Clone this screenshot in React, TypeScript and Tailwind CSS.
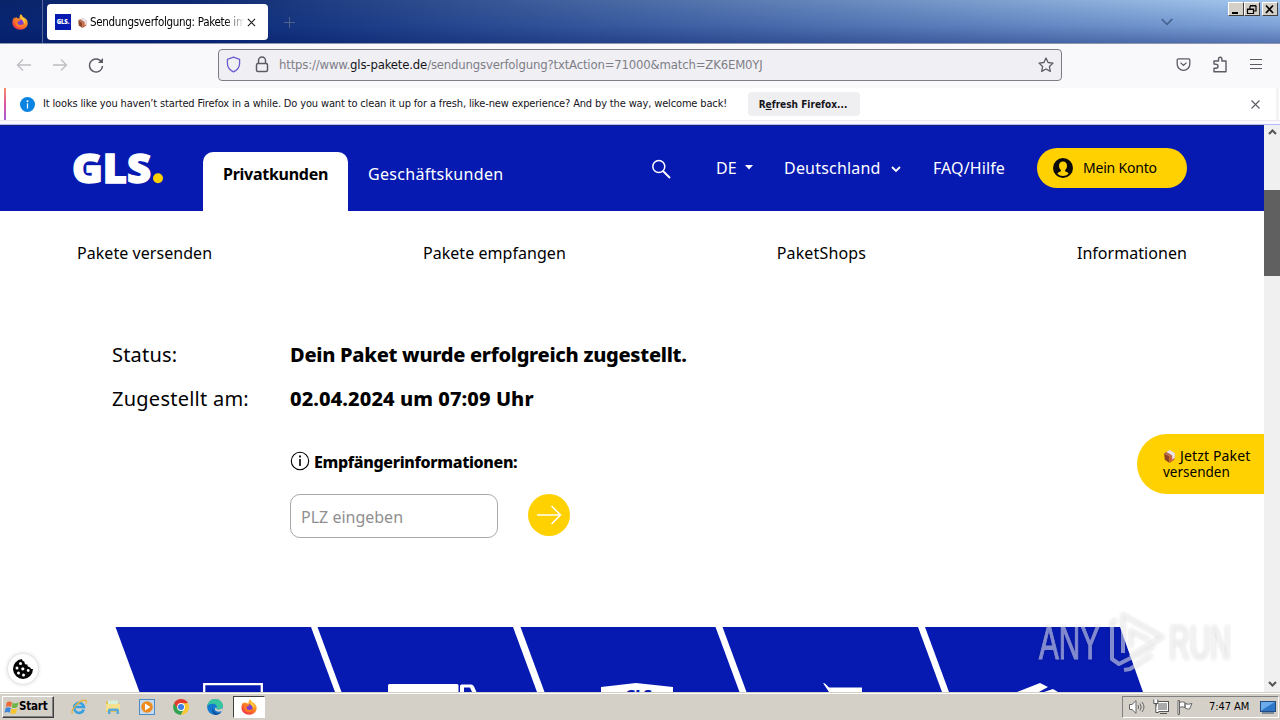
import React from "react";

const Firefox = ({ className = "" }: { className?: string }) => (
  <svg viewBox="0 0 16 16" className={className}>
    <defs>
      <linearGradient id="ffx" x1="0.85" y1="0" x2="0.2" y2="1">
        <stop offset="0" stopColor="#ffe14a" />
        <stop offset="0.45" stopColor="#ff8a1e" />
        <stop offset="1" stopColor="#f0294f" />
      </linearGradient>
    </defs>
    <path d="M8.6.3c1.300.8 2 1.700 2.300 2.800 2.800 1 4.800 3.200 4.800 6 0 4-3.400 6.700-7.500 6.700S.4 12.700.4 8.800C.4 6.500 1 4.600 2.300 3.200l.4 1.200 1.600-1.500.7 1.400c1-.2 2 0 2.600.3C7.400 3 7.700 1.400 8.600.3z" fill="url(#ffx)" />
    <circle cx="8.200" cy="9" r="3.500" fill="#7a3fd0" />
    <path d="M4.500 5.600c1.500-.5 3 0 4 .9-.8.9-2.300.8-2.800 1.500-.5 1.500.6 3 2.600 3 1.700 0 3-1 3.500-2.300.3 2.700-1.300 4.600-3.900 4.600-3 0-5-2.300-4.700-5z" fill="#ff7a25" />
    <path d="M9.300 2c.5 1.500 2.300 2.200 3 4 .8 1.700.5 3.300 0 4.300C12.200 7 9 6 9.300 2z" fill="#ffd23c" />
  </svg>
);

const Parcel = ({ className = "" }: { className?: string }) => (
  <svg viewBox="0 0 12 13" className={className}>
    <path d="M1 4l5 2.500V13L1.600 10z" fill="#8d4326" />
    <path d="M11 4L6 6.500V13l4.500-3z" fill="#c9603c" />
    <path d="M1 4l5-3 5 3-5 2.700z" fill="#d9b09c" />
    <path d="M3 3l5.500 3v4L11 8V4L6 1z" fill="#e9e2ea" />
    <path d="M1 4l2-1.200L8 5.600 6 6.700z" fill="#b8694a" />
  </svg>
);

const TitleBar = () => (
  <div className="relative flex h-[43px] shrink-0 bg-[linear-gradient(90deg,#0a246a_0%,#0d2a72_15%,#a6caf0_100%)]">
    <div className="absolute inset-0 bg-[linear-gradient(180deg,rgba(0,50,150,0)_0%,rgba(0,40,140,0.25)_60%,rgba(0,25,110,0.48)_100%)]" />
    <div className="relative flex w-full items-start">
      <div className="flex h-full w-[43px] items-center justify-center border-r border-[#54689b] pr-[2px]">
        <Firefox className="h-4 w-4" />
      </div>
      <div className="mt-1 ml-1 flex h-9 w-[221px] items-center rounded bg-white pl-2">
        <div className="flex h-4 w-4 shrink-0 items-center justify-center bg-[#061ab1]">
          <span className="font-['Open_Sans',sans-serif] text-[6px] leading-none font-extrabold tracking-[-0.1px] text-white">GLS.</span>
        </div>
        <Parcel className="ml-[6px] h-[11px] w-[11px] shrink-0" />
        <div className="ml-[2px] w-[154px] overflow-hidden bg-[linear-gradient(90deg,#000_135px,transparent_155px)] bg-clip-text pt-[2px] font-['DejaVu_Sans_Condensed','DejaVu_Sans',sans-serif] text-[11.500px] tracking-[-0.3px] whitespace-nowrap text-transparent">
          Sendungsverfolgung: Pakete im
        </div>
        <svg viewBox="0 0 10 10" className="ml-[3px] h-[9px] w-[9px] shrink-0" stroke="#222" strokeWidth="1.300">
          <path d="M1 1l8 8M9 1L1 9" />
        </svg>
      </div>
      <svg viewBox="0 0 11 11" className="mt-[17px] ml-4 h-[11px] w-[11px]" stroke="#4f6287" strokeWidth="1">
        <path d="M5.500 0v11M0 5.500h11" />
      </svg>
      <svg viewBox="0 0 12 8" className="mt-[18px] ml-[866px] h-2 w-3" fill="none" stroke="#45618f" strokeWidth="1.700">
        <path d="M.7 1L6 6.300 11.300 1" />
      </svg>
      <div className="mt-[2px] ml-[55px] flex">
        <WinButton><path d="M3 10h6" strokeWidth="2" /></WinButton>
        <WinButton><path d="M5 3h6v5H9M5 2.500h6M2.500 6h6v4.500h-6zM2.500 6.500h6M5 3v3" strokeWidth="1.200" /></WinButton>
        <div className="w-[2px]" />
        <WinButton><path d="M3 2.500l7 7.500M10 2.500L3 10" strokeWidth="1.700" /></WinButton>
      </div>
    </div>
  </div>
);

const WinButton = ({ children }: { children: React.ReactNode }) => (
  <div className="h-[14px] w-4 border border-t-white border-r-[#404040] border-b-[#404040] border-l-white bg-[#d4d0c8]">
    <svg viewBox="0 0 14 12" className="h-3 w-[14px]" fill="none" stroke="#000">{children}</svg>
  </div>
);

const ToolBar = () => (
  <div className="flex h-[45px] shrink-0 items-center border-t border-[#8d97b0] bg-[#f9f9fb] pb-[3px]">
    <svg viewBox="0 0 16 14" className="ml-4 h-[14px] w-4" fill="none" stroke="#bcbcc2" strokeWidth="1.300">
      <path d="M15 7H1.500M7 1.500L1.500 7 7 12.500" />
    </svg>
    <svg viewBox="0 0 16 14" className="ml-5 h-[14px] w-4" fill="none" stroke="#bcbcc2" strokeWidth="1.300">
      <path d="M1 7h13.500M9 1.500L14.500 7 9 12.500" />
    </svg>
    <svg viewBox="0 0 16 16" className="ml-5 h-4 w-4" fill="none" stroke="#5b5b66" strokeWidth="1.400">
      <path d="M13.800 5.500A6.500 6.500 0 1 0 14.500 9" />
      <path d="M15 1v5h-5z" fill="#5b5b66" stroke="none" />
    </svg>
    <div className="ml-[114px] flex h-8 w-[844px] shrink-0 items-center rounded-[4px] border border-[#7d7d86] bg-[#f0f0f4] pl-2">
      <svg viewBox="0 0 16 18" className="-ml-px h-[17px] w-[15px]" fill="none" stroke="#6a5cd0" strokeWidth="1.400">
        <path d="M8 1.200l6.500 2.300v4.300c0 4-2.500 7-6.500 9-4-2-6.500-5-6.500-9V3.500z" strokeLinejoin="round" />
      </svg>
      <svg viewBox="0 0 14 17" className="ml-[14px] h-[17px] w-[14px]" fill="none" stroke="#5b5b66" strokeWidth="1.500">
        <rect x="1.500" y="7.500" width="11" height="8" rx="1.500" />
        <path d="M3.500 7.500v-3a3.500 3.500 0 0 1 7 0v3" />
      </svg>
      <div className="ml-[10px] w-[760px] font-['DejaVu_Sans_Condensed','DejaVu_Sans',sans-serif] text-[13px] tracking-[-0.17px] whitespace-nowrap text-[#7e7e88]">
        https://www.<span className="text-[#15141a]">gls-pakete.de</span>/sendungsverfolgung?txtAction=71000&amp;match=ZK6EM0YJ
      </div>
      <svg viewBox="0 0 16 16" className="-ml-px h-4 w-4" fill="none" stroke="#5b5b66" strokeWidth="1.300" strokeLinejoin="round">
        <path d="M8 1l2.100 4.500 4.900.6-3.600 3.400.9 4.900L8 12l-4.300 2.400.9-4.900L1 6.100l4.900-.6z" />
      </svg>
    </div>
    <svg viewBox="0 0 16 14" className="ml-[114px] h-[13px] w-[15px]" fill="none" stroke="#5b5b66" strokeWidth="1.400">
      <path d="M2.500 1h11A1.300 1.300 0 0 1 14.800 2.300V6.500a6.700 6.700 0 0 1-13.600 0V2.300A1.300 1.300 0 0 1 2.500 1zM4.800 5L8 8l3.200-3" />
    </svg>
    <svg viewBox="0 0 16 17" className="ml-[21px] h-[17px] w-4" fill="none" stroke="#5b5b66" strokeWidth="1.400">
      <path d="M2 8V5h4.500V3a1.700 1.700 0 0 1 3.400 0v2H14v10.800H2V12.200h2a2 2 0 0 0 0-4z" strokeLinejoin="round" />
    </svg>
    <svg viewBox="0 0 12 12" className="-mt-px ml-[22px] h-3 w-3" stroke="#5b5b66" strokeWidth="1.200">
      <path d="M0 1.500h12M0 6.500h12M0 10.500h12" />
    </svg>
  </div>
);

const InfoBar = () => (
  <div className="flex h-[37px] shrink-0 flex-col border-b border-[#aeb9ff] bg-[#f9f9fb]">
    <div className="flex h-8 items-center bg-white">
      <div className="ml-[4px] h-8 w-[2px] bg-[linear-gradient(180deg,#f5906a,#e0559e_50%,#a05bd8)]" />
      <div className="ml-[14px] flex h-[15px] w-[15px] items-center justify-center rounded-full bg-[#0a84e0]">
        <svg viewBox="0 0 15 15" className="h-[15px] w-[15px]" fill="#fff"><circle cx="7.500" cy="4.300" r="1" /><rect x="6.900" y="6.300" width="1.200" height="5.200" /></svg>
      </div>
      <div className="ml-[8px] w-[705px] font-['DejaVu_Sans_Condensed','DejaVu_Sans',sans-serif] text-[11px] tracking-[-0.148px] whitespace-nowrap text-[#15141a]">
        It looks like you haven’t started Firefox in a while. Do you want to clean it up for a fresh, like-new experience? And by the way, welcome back!
      </div>
      <div className="flex h-6 w-[112px] items-center justify-center rounded bg-[#efeff2] pr-[2px] font-['DejaVu_Sans_Condensed','DejaVu_Sans',sans-serif] text-[10px] font-bold tracking-[0.02px] whitespace-nowrap text-[#15141a]">
        R<span className="underline">e</span>fresh Firefox...
      </div>
      <svg viewBox="0 0 9 9" className="ml-[391px] h-[9px] w-[9px]" stroke="#5b5b66" strokeWidth="1.100"><path d="M.5.5l8 8M8.500.5l-8 8" /></svg>
      <div className="ml-4 h-8 w-[3px] bg-[#f3f3f6]" />
    </div>
    <div className="h-px bg-[#e9e6f0]" />
  </div>
);

const Header = () => (
  <header className="flex h-[86px] shrink-0 border-t border-[#1a2373] bg-[#061ab1] font-['Noto_Sans',sans-serif] text-[16px] leading-6 text-white">
    <svg viewBox="0 0 92 50" className="mt-[16px] ml-[73px] h-[50px] w-[92px]">
      <text x="-1" y="41" textLength="79" lengthAdjust="spacingAndGlyphs" fill="#fff" className="font-['Open_Sans',sans-serif] text-[40px] font-extrabold" stroke="#fff" strokeWidth="1.400">GLS</text>
      <circle cx="85" cy="36.200" r="5" fill="#ffd100" />
    </svg>
    <div className="mt-[26px] ml-[38px] w-[145px] rounded-t-[10px] bg-white pt-[10px] pl-5 font-bold whitespace-nowrap text-black">
      <span className="tracking-[-0.27px]">Privatkunden</span>
    </div>
    <div className="mt-9 ml-5 w-[283px] tracking-[0.3px] whitespace-nowrap">Geschäftskunden</div>
    <svg viewBox="0 0 20 20" className="mt-[33px] h-5 w-5" fill="none" stroke="#fff" strokeWidth="1.500">
      <circle cx="7.800" cy="7.500" r="6" /><path d="M12 12l7 7" strokeWidth="2" />
    </svg>
    <div className="mt-[30px] ml-[45px] w-[29px]">DE</div>
    <svg viewBox="0 0 8 5" className="mt-[39px] h-[5px] w-2" fill="#fff"><path d="M0 0h8L4 4.500z" /></svg>
    <div className="mt-[30px] ml-[31px] w-[107px] tracking-[0.2px] whitespace-nowrap">Deutschland</div>
    <svg viewBox="0 0 10 7" className="mt-[40px] h-[7px] w-[10px]" fill="none" stroke="#fff" strokeWidth="1.800"><path d="M1 1l4 4 4-4" /></svg>
    <div className="mt-[30px] ml-8 w-[104px] tracking-[0.1px] whitespace-nowrap">FAQ/Hilfe</div>
    <div className="mt-[22px] flex h-10 w-[150px] items-center rounded-full bg-[#ffd100] pl-4 text-[14px] whitespace-nowrap text-black">
      <svg viewBox="0 0 20 20" className="h-5 w-5">
        <circle cx="10" cy="10" r="10" fill="#0a0a0a" />
        <path d="M10 3.500c-2.500 0-4 1.800-4 4.300 0 1.800.8 3.300 1.900 4.200v1.200c-1.600.6-3 1.300-3.600 2.500a8.500 8.500 0 0 0 11.400 0c-.6-1.200-2-1.900-3.600-2.500V12c1.100-.9 1.900-2.400 1.900-4.200 0-2.500-1.500-4.300-4-4.300z" fill="#ffd100" />
      </svg>
      <span className="ml-[10px] tracking-[-0.2px]">Mein Konto</span>
    </div>
  </header>
);

const SubNav = () => (
  <nav className="flex h-[85px] shrink-0 justify-between pt-[30px] pr-[77px] pl-[77px] font-['Noto_Sans',sans-serif] text-[16px] leading-6 tracking-[0.05px] text-black">
    <span>Pakete versenden</span>
    <span>Pakete empfangen</span>
    <span className="tracking-[0.15px]">PaketShops</span>
    <span>Informationen</span>
  </nav>
);

const Status = () => (
  <section className="grid grid-cols-[178px_1fr] pt-[44px] pl-[112px] font-['Noto_Sans',sans-serif] text-[20px] leading-[30px] whitespace-nowrap text-black">
    <span className="tracking-[0.2px]">Status:</span>
    <span className="font-extrabold tracking-[-0.28px]">Dein Paket wurde erfolgreich zugestellt.</span>
    <span className="mt-[14px] tracking-[0.25px]">Zugestellt am:</span>
    <span className="mt-[14px] font-extrabold tracking-[0.08px]">02.04.2024 um 07:09 Uhr</span>
    <div className="col-start-2 mt-[37px] flex h-5 items-center">
      <svg viewBox="0 0 20 20" className="h-5 w-5" fill="none" stroke="#000" strokeWidth="1.100">
        <circle cx="10" cy="10" r="8.700" /><path d="M10 8v7" strokeWidth="1.600" /><path d="M10 4.500v2" strokeWidth="1.800" />
      </svg>
      <span className="mt-[2px] ml-1 text-[16px] font-extrabold tracking-[-0.34px]">Empfängerinformationen:</span>
    </div>
    <div className="col-start-2 mt-[23px] flex">
      <div className="h-11 w-[208px] rounded-[10px] border border-[#a9a9a9] pt-[7px] pl-[10px] text-[16px] text-[#8f8f8f]">PLZ eingeben</div>
      <div className="ml-[30px] flex h-[42px] w-[42px] items-center justify-center rounded-full bg-[#ffd100]">
        <svg viewBox="0 0 26 20" className="h-5 w-[26px]" fill="none" stroke="#fff" strokeWidth="1.500"><path d="M1 10h23M15.500 1l9 9-9 9" /></svg>
      </div>
    </div>
  </section>
);

const Tiles = () => (
  <svg viewBox="0 0 1264 65" className="absolute bottom-0 left-0 h-[65px] w-[1264px]">
    <g fill="#061ab1">
      <path d="M115.500 0H311l24 65H139.500z" />
      <path d="M317.500 0H513l24 65H341.500z" />
      <path d="M520.500 0H715.500l24 65H544.500z" />
      <path d="M722.500 0H918l24 65H746.500z" />
      <path d="M925 0H1120l23 65H949z" />
    </g>
    <path d="M204.200 65V57.200h57.600V65" fill="none" stroke="#fff" strokeWidth="2.300" />
    <path d="M388 65v-6.500a1.500 1.500 0 0 1 1.500-1.500H457a1.500 1.500 0 0 1 1.500 1.500V65z" fill="#fff" />
    <path d="M460 65v-6a1.500 1.500 0 0 1 1.500-1.500H471q2 0 3 2l2.500 5.500H472l-2-4.500h-6V65z" fill="#fff" />
    <path d="M601 65v-5l35-4 37 4v5z" fill="#fff" />
    <text x="625" y="74" fill="#061ab1" className="font-['Open_Sans',sans-serif] text-[15px] font-extrabold" textLength="27">GLS</text>
    <path d="M823 56l2 .5 4 4H862V65H829z" fill="#fff" />
    <path d="M1017 65l23-9 8 4-9 5zM1044 65l9-3 5 3z" fill="#fff" />
  </svg>
);

const Watermark = () => (
  <svg viewBox="0 0 200 66" className="absolute bottom-[17px] left-[1037px] h-[66px] w-[200px] drop-shadow-[0_0_1.500px_rgba(0,0,0,0.3)]">
    <g fill="#fff" opacity="0.5" stroke="#fff" strokeWidth="1.200" className="font-['Liberation_Sans_Narrow','Liberation_Sans',sans-serif] text-[48px]">
      <text x="2" y="50" textLength="61" lengthAdjust="spacingAndGlyphs">ANY</text>
      <text x="132" y="50" textLength="62" lengthAdjust="spacingAndGlyphs">RUN</text>
    </g>
    <g fill="none" stroke="#fff" strokeWidth="4" opacity="0.5" strokeLinejoin="round">
      <path d="M86 44V6l39 22-32 20" />
      <path d="M80 11l-5 2v37l7 5 35-18M94 38V22l18 9" />
      <path d="M87 61l6-1 22-14" />
    </g>
  </svg>
);

const Page = () => (
  <div className="relative flex h-[567px] shrink-0">
    <div className="relative flex w-[1264px] flex-col overflow-hidden bg-white">
      <Header />
      <SubNav />
      <Status />
      <Tiles />
      <div className="absolute top-[309px] right-0 h-[60px] w-[127px] rounded-l-full bg-[#ffd100] pt-[14px] pl-[26px] font-['Noto_Sans',sans-serif] text-[14px] leading-4 whitespace-nowrap text-black">
        <div className="flex items-center"><Parcel className="mr-[4px] h-[14px] w-[13px]" /><span className="tracking-[0.15px]">Jetzt Paket</span></div>
        <div className="text-[13.500px]">versenden</div>
      </div>
      <div className="absolute bottom-[8px] left-[8px] flex h-[30px] w-[30px] items-center justify-center rounded-full bg-white shadow-[0_0_4px_rgba(0,0,0,0.25)]">
        <svg viewBox="0 0 20 20" className="h-5 w-5">
          <path d="M9 0a10 10 0 1 0 11 10c-1.500.3-2.600-.4-2.800-1.800-1.700.3-3-.9-2.700-2.600C12.300 5.800 11 4 11.500 2.600 10 2.500 9 1.500 9 0z" fill="#050505" />
          <g fill="#fff"><circle cx="7.500" cy="4.500" r="1.500" /><circle cx="4" cy="9" r="1.500" /><circle cx="9.800" cy="9.800" r="1.600" /><circle cx="15.200" cy="11.500" r="1.400" /><circle cx="5.500" cy="14" r="1.500" /><circle cx="10.500" cy="16" r="1.500" /></g>
        </svg>
      </div>
      <Watermark />
    </div>
    <div className="flex w-4 flex-col items-center bg-[#f0f0f0] pt-[4px]">
      <svg viewBox="0 0 9 6" className="h-[6px] w-[9px]" fill="none" stroke="#555" strokeWidth="2"><path d="M1 5l3.500-3.500L8 5" /></svg>
      <div className="mt-[55px] h-[86px] w-4 bg-[#606060]" />
      <svg viewBox="0 0 9 6" className="mt-auto mb-[5px] h-[6px] w-[9px]" fill="none" stroke="#555" strokeWidth="2"><path d="M1 1l3.500 3.500L8 1" /></svg>
    </div>
  </div>
);

const Taskbar = () => (
  <div className="flex h-7 shrink-0 border-t border-[#d4d0c8] bg-[#d4d0c8] shadow-[inset_0_1px_0_#fff]">
    <div className="mt-[3px] ml-[2px] flex h-[22px] w-[52px] items-center border border-t-white border-r-[#404040] border-b-[#404040] border-l-white pl-px shadow-[inset_-1px_-1px_0_#808080]">
      <svg viewBox="0 0 16 16" className="h-[15px] w-4 shrink-0">
        <path d="M2.500 2.500Q5 .8 8 2.500L7 7.500Q4 6 1.300 7.500z" fill="#ec6a35" />
        <path d="M8.700 3Q12 4.500 15 2.500l-1.300 5Q11 9.300 7.800 8z" fill="#6fb545" />
        <path d="M1.200 8.500Q4 7 6.800 8.500l-1.200 5Q3 12 0 13.500z" fill="#3f87d8" />
        <path d="M7.500 9q3 1.500 6 0l-1.300 5Q9 15.500 6.300 14z" fill="#f6c52c" />
      </svg>
      <span className="-ml-px font-['DejaVu_Sans_Condensed','DejaVu_Sans',sans-serif] text-[11.500px] font-bold tracking-[-0.2px] text-black">Start</span>
    </div>
    <div className="mt-[6px] ml-[17px] flex gap-[18px]">
      <svg viewBox="0 0 16 16" className="h-4 w-4" fill="none">
        <path d="M12.800 10.500A5 5 0 1 1 13 8H4" stroke="#3aa0e0" strokeWidth="2.600" />
        <path d="M1.500 14.500C-1 11.500 9-.5 15 1.500c1 .6.500 2-.2 3" stroke="#e7b33a" strokeWidth="1.300" />
      </svg>
      <svg viewBox="0 0 16 16" className="h-4 w-4">
        <path d="M1 2h5l1 1.500h7V13H1z" fill="#e4c260" /><path d="M3 1.500h10v5H3z" fill="#d8efdc" /><path d="M1 5h14v7H1z" fill="#f7e08c" />
        <path d="M3 15v-4q0-1.500 1.500-1.500h8Q14 9.500 14 11v4h-2.500v-3h-6v3z" fill="#5ba9d8" />
      </svg>
      <svg viewBox="0 0 16 16" className="h-4 w-4">
        <rect x=".5" y=".5" width="15" height="15" fill="#c6dcee" stroke="#4b8cc6" /><circle cx="8" cy="8" r="5.800" fill="#ef8a1d" /><path d="M6 4.500v7L11.500 8z" fill="#fff" />
      </svg>
      <svg viewBox="0 0 16 16" className="h-4 w-4">
        <path d="M8 8L1.200 4A7.900 7.900 0 0 1 14.900 4z" fill="#e33b2e" /><path d="M8 8L1.200 4A7.900 7.900 0 0 0 7.900 15.900L11 9.500z" fill="#34a350" /><path d="M8 4.200h7A7.900 7.900 0 0 1 7.900 15.900L11.400 10z" fill="#f9c72f" /><path d="M1.200 4H8v4L4.700 10z" fill="#e33b2e" />
        <circle cx="8" cy="8" r="3.900" fill="#fff" /><circle cx="8" cy="8" r="3" fill="#3c7de6" />
      </svg>
      <svg viewBox="0 0 16 16" className="h-4 w-4">
        <circle cx="8" cy="8" r="7.900" fill="#1579cf" />
        <path d="M.3 7C1 2.500 4.500.1 8.200.1c4.500 0 7.700 3 7.700 6.500 0 2.500-2 4-4.500 4-1.700 0-2.400-.7-1.700-1.600C10.500 6.500 8.500 4.800 6 4.800 3.500 4.800 1.300 5.700.3 7z" fill="#38c69d" />
        <path d="M6 8.500c-.5 3 2 5.500 5 5.500 1.500 0 3-.5 4-1.500-1.500 2.300-4 3.400-6.500 3.400C5.500 15 4 11 6 8.500z" fill="#12529b" />
        <path d="M9.700 9c-.7.900 0 1.600 1.700 1.600 2 0 3.600-.8 4.400-2l-.3 3c-2 1.400-6 1.700-7.300-.6-.5-1 0-2 .5-2.500z" fill="#d4d0c8" />
      </svg>
    </div>
    <div className="mt-[3px] ml-[10px] flex h-[22px] w-8 items-center justify-center border border-t-[#404040] border-r-white border-b-white border-l-[#404040] bg-white">
      <Firefox className="h-4 w-4" />
    </div>
    <div className="mt-[3px] ml-auto flex h-[22px] w-[157px] items-center border border-t-[#808080] border-r-white border-b-white border-l-[#808080] pl-[6px]">
      <svg viewBox="0 0 16 14" className="h-[14px] w-4" stroke="#666" fill="none"><path d="M.5 4.500H3L7 .7v12.600L3 9.500H.5z" fill="#fff" /><path d="M9 5q1.300 2 0 4M11 3.500q2.500 3.500 0 7M13 2q4 5 0 10" /></svg>
      <svg viewBox="0 0 16 16" className="ml-2 h-4 w-4" stroke="#555" fill="none"><rect x="4.500" y="3.500" width="10" height="8" fill="#aaa" stroke="#fff" /><rect x="3.500" y="2.500" width="12" height="10" /><path d="M7 14.500h7M.8.500v4h4v-4M2.800 4.500v9h3" fill="#fff" /></svg>
      <svg viewBox="0 0 16 15" className="ml-2 h-[15px] w-4" stroke="#666" fill="#fff"><path d="M1 .5h1.500v14H1zM2.500 2.500q3-1.500 5.500 0v5q-3-1.500-5.500 0zM8 3.500q3 1.500 7 0L12.500 9Q10 9.500 8 8z" /></svg>
      <span className="ml-4 w-[52px] font-['DejaVu_Sans_Condensed','DejaVu_Sans',sans-serif] text-[11px] tracking-[-0.05px] whitespace-nowrap text-black">7:47 AM</span>
      <svg viewBox="0 0 16 13" className="-ml-px h-[13px] w-4 shrink-0"><rect x=".5" y=".5" width="15" height="10" fill="#2e77c8" stroke="#244b7d" /><path d="M1 1h14L5 7 1 10z" fill="#6cacec" /><path d="M2 12h12" stroke="#28466c" /></svg>
    </div>
    <div className="w-px" />
  </div>
);

export default function App() {
  return (
    <div className="flex h-[720px] w-[1280px] flex-col overflow-hidden bg-white">
      <TitleBar />
      <ToolBar />
      <InfoBar />
      <Page />
      <Taskbar />
    </div>
  );
}
